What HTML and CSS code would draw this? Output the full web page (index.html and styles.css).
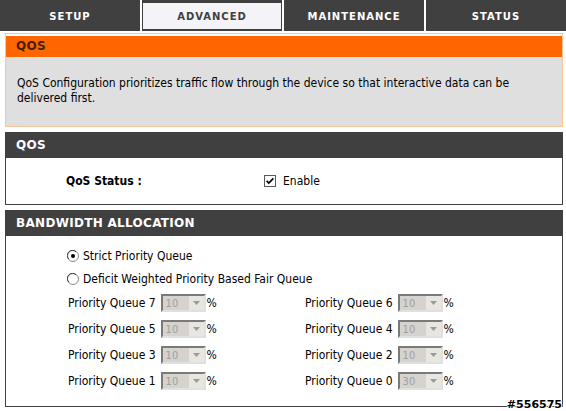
FILE: index.html
```html
<!DOCTYPE html>
<html lang="en">
<head>
  <meta charset="UTF-8">
  <title>QoS</title>
  <link rel="stylesheet" href="styles.css">
</head>
<body>
  <!-- Pestañas principales -->
  <div class="tabs">
    <div class="tab">SETUP</div>
    <div class="tab active">ADVANCED</div>
    <div class="tab">MAINTENANCE</div>
    <div class="tab">STATUS</div>
  </div>

  <!-- Descripción -->
  <div class="box intro">
    <h2 class="box-head">QOS</h2>
    <p class="box-text">QoS Configuration prioritizes traffic flow through the device so that interactive data can be<br>delivered first.</p>
  </div>

  <!-- Estado QoS -->
  <div class="box">
    <h2 class="box-head">QOS</h2>
    <div class="status-row">
      <span class="status-label">QoS Status :</span>
      <label class="check">
        <svg width="12" height="12" viewBox="0 0 12 12"><rect x="0.5" y="0.5" width="11" height="11" fill="#fff" stroke="#5a5a5a"/><path d="M2.6 5.8 L4.8 8.1 L9.4 3.3" fill="none" stroke="#000" stroke-width="1.7"/></svg>
        Enable
      </label>
    </div>
  </div>

  <!-- Asignación de ancho de banda -->
  <div class="box">
    <h2 class="box-head">BANDWIDTH ALLOCATION</h2>
    <div class="bw-body">
      <label class="radio-row">
        <svg width="12" height="12" viewBox="0 0 12 12"><circle cx="6" cy="6" r="5.5" fill="#fff" stroke="#8a8a8a"/><path d="M1.8 9 A5 5 0 0 1 9 1.8" fill="none" stroke="#404040"/><circle cx="6" cy="6" r="2" fill="#000"/></svg>
        Strict Priority Queue
      </label>
      <label class="radio-row">
        <svg width="12" height="12" viewBox="0 0 12 12"><circle cx="6" cy="6" r="5.5" fill="#fff" stroke="#8a8a8a"/><path d="M1.8 9 A5 5 0 0 1 9 1.8" fill="none" stroke="#404040"/></svg>
        Deficit Weighted Priority Based Fair Queue
      </label>
      <div class="queues" id="queues"></div>
    </div>
  </div>

  <div class="mark">#556575</div>

  <script>
    // Colas de prioridad: [número, valor]
    const queues = [[7, 10], [6, 10], [5, 10], [4, 10], [3, 10], [2, 10], [1, 10], [0, 30]];
    const queuesDiv = document.getElementById('queues');
    const arrow = '<svg width="7" height="4" viewBox="0 0 7 4"><path d="M0 0 H7 L3.5 4 Z" fill="#9a9a9a"/></svg>';

    queues.forEach(function (q) {
      queuesDiv.innerHTML += `
        <div class="queue">
          <span>Priority Queue ${q[0]}</span>
          <span class="select"><span class="select-val">${q[1]}</span><span class="select-btn">${arrow}</span></span>
          <span>%</span>
        </div>`;
    });
  </script>
</body>
</html>
```

FILE: styles.css
```css
body {
  margin: 0;
  font-family: "DejaVu Sans Condensed", "DejaVu Sans", sans-serif;
  font-size: 12px;
  color: #000;
  background: #fff;
  position: relative;
  height: 411px;
  overflow: hidden;
}
.tabs {
  display: grid;
  grid-template-columns: repeat(4, 1fr);
  gap: 2px;
  height: 31px;
}
.tab {
  background: #404040;
  color: #fff;
  font-family: "DejaVu Sans", sans-serif;
  font-weight: bold;
  font-size: 10px;
  letter-spacing: 1px;
  display: flex;
  align-items: center;
  justify-content: center;
  padding-top: 1px;
}
.tab.active {
  background: #f4f3f8;
  color: #404040;
  border: 1px solid #404040;
  border-top-width: 3px;
  border-bottom-width: 2px;
  padding-top: 0;
}
.box {
  margin: 5px 3px 0 5px;
  border: 1px solid #404040;
}
.box-head {
  margin: 0;
  height: 25px;
  line-height: 25px;
  padding: 0 10px;
  background: #404040;
  color: #fff;
  font-family: "DejaVu Sans", sans-serif;
  font-size: 12px;
  font-weight: bold;
  letter-spacing: 0.3px;
}
.intro {
  margin-top: 2px;
  border-color: #f9c69a;
  padding-top: 2px;
}
.intro .box-head {
  background: #ff6600;
  color: #4a2000;
  height: 21px;
  line-height: 21px;
}
.box-text {
  margin: 0;
  background: #dfdfdf;
  padding: 19px 11px 20px;
  line-height: 15px;
}
.status-row {
  display: grid;
  grid-template-columns: 198px auto;
  align-items: center;
  height: 46px;
  padding-left: 60px;
}
.status-label {
  font-weight: bold;
}
.check {
  display: flex;
  align-items: center;
  gap: 7px;
}
.bw-body {
  padding: 8px 0 12px 61px;
}
.radio-row {
  display: flex;
  align-items: center;
  gap: 4px;
  height: 23px;
}
.queues {
  display: grid;
  grid-template-columns: 237px auto;
  padding-left: 1px;
}
.queue {
  display: flex;
  align-items: center;
  height: 26px;
}
.select {
  display: flex;
  align-items: center;
  width: 45px;
  height: 18px;
  margin: 0 1px 0 5px;
  box-sizing: border-box;
  border: 2px solid #7a7a7a;
  border-right-color: #e0e0e0;
  border-bottom-color: #e0e0e0;
  background: #d6d3ce;
  color: #a0a0a0;
  font-size: 11px;
}
.select-val {
  flex: 1;
  padding-left: 3px;
}
.select-btn {
  display: flex;
  align-items: center;
  justify-content: center;
  width: 15px;
  height: 14px;
  background: #e8e6e1;
}
.mark {
  position: absolute;
  right: 4px;
  bottom: 0;
  font-family: "DejaVu Sans", sans-serif;
  font-size: 11px;
  font-weight: bold;
  color: #000;
  text-shadow: 1px 0 #fff, -1px 0 #fff, 0 1px #fff, 0 -1px #fff;
}
```
